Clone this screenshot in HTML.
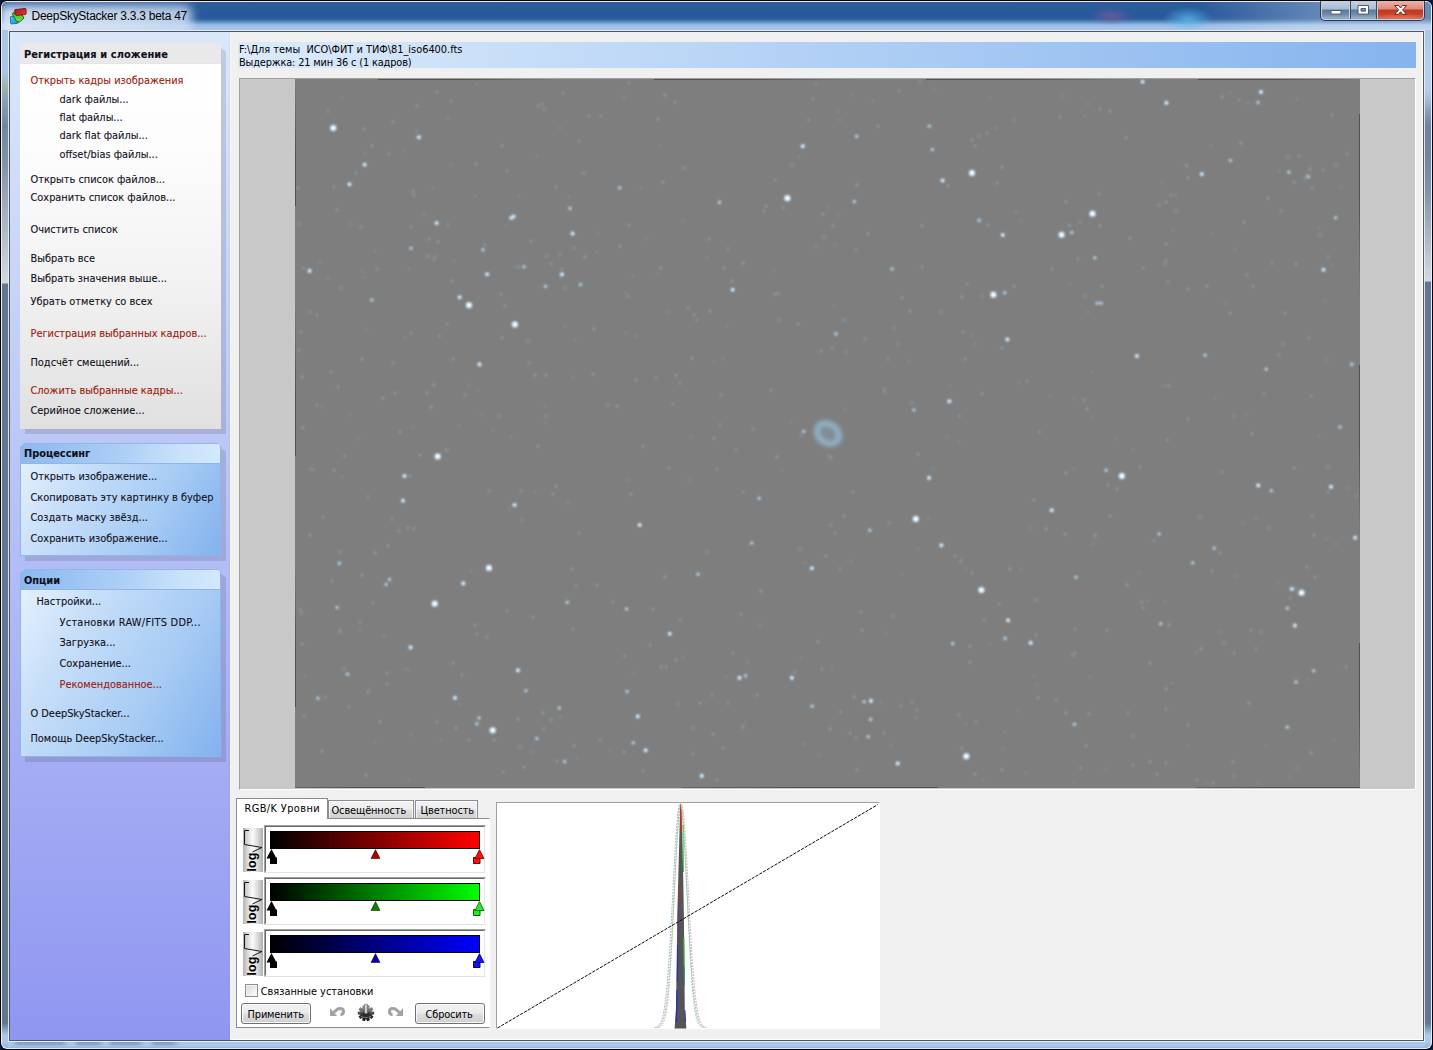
<!DOCTYPE html>
<html><head><meta charset="utf-8"><title>DeepSkyStacker 3.3.3 beta 47</title>
<style>
html,body{margin:0;padding:0;}
body{width:1433px;height:1050px;overflow:hidden;position:relative;background:#0a1a3a;font-family:"DejaVu Sans Condensed","Liberation Sans",sans-serif;font-size:11px;color:#10101a;}
.a{position:absolute;}
.t{position:absolute;white-space:pre;line-height:13px;height:13px;font-size:10.9px;-webkit-text-stroke:0.1px currentColor;}
.r{color:#9c200a;}
.n{-webkit-text-stroke:0;}
.b{font-weight:bold;}
svg{position:absolute;overflow:visible;}
</style></head>
<body>
<div class="a" style="left:0;top:0;width:1433px;height:1050px;background:#000;border-radius:7px;"></div>
<div class="a" style="left:1px;top:1px;width:1431px;height:1048px;background:#e6eff9;border-radius:6px;"></div>
<div class="a" style="left:2px;top:2px;width:1429px;height:1046px;background:linear-gradient(180deg,#7c9bc4 0,#7c9bc4 8px,#a9c7ea 30px,#a9c7ea 70px,#9fb4a8 85px,#8aa0b4 100px,#71869e 125px,#8193a8 160px,#d3d9e1 281px,#62778f 282px,#62778f 1021px,#a9c8ec 1033px,#a9c8ec 1040px,#8fb4df 1046px);border-radius:5px;"></div>
<div class="a" style="left:1424px;top:30px;width:7px;height:272px;background:linear-gradient(180deg,#a9c7ea 0,#b2cdef 28px,#b2cdef 60px,#a3bcd8 70px,#7f95ae 86px,#6f849c 96px,#71869e 125px,#8193a8 160px,#d3d9e1 251px,#62778f 252px);"></div>
<div class="a" style="left:2px;top:2px;width:1429px;height:28px;background:radial-gradient(ellipse 22px 9px at 1109px 14px,rgba(150,90,150,.55),rgba(150,90,150,0) 100%),radial-gradient(ellipse 26px 12px at 1186px 17px,rgba(90,190,240,.75),rgba(90,190,240,0) 100%),linear-gradient(100deg,rgba(255,255,255,0) 1180px,rgba(255,255,255,.28) 1300px,rgba(255,255,255,.30) 1429px),linear-gradient(180deg,#2c5d9a 0,#27589a 14px,#2d5f9c 17px,#5f8cc2 20px,#9abce6 23px,#a6c6ec 28px);border-radius:5px 5px 0 0;"></div>
<div class="a" style="left:8px;top:1041px;width:1417px;height:7px;background:linear-gradient(180deg,#cfe2f7 0,#a9c8ec 1px,#a9c8ec 5px,#8fb4df 7px);"></div>
<div class="a" style="left:12px;top:1041px;width:170px;height:4px;filter:blur(1.6px);background:linear-gradient(90deg,rgba(70,95,135,0) 0,rgba(70,95,135,.45) 6px,rgba(70,95,135,.45) 50px,rgba(70,95,135,0) 56px,rgba(70,95,135,0) 62px,rgba(70,95,135,.45) 66px,rgba(70,95,135,.45) 86px,rgba(70,95,135,0) 92px,rgba(70,95,135,0) 96px,rgba(70,95,135,.45) 100px,rgba(70,95,135,.45) 126px,rgba(70,95,135,0) 132px,rgba(70,95,135,0) 138px,rgba(70,95,135,.45) 142px,rgba(70,95,135,.45) 160px,rgba(70,95,135,0) 168px);"></div>
<div class="a" style="left:2px;top:2px;width:230px;height:28px;overflow:hidden;border-radius:5px 0 0 0;"><div class="a" style="left:-3px;top:3px;width:193px;height:32px;background:linear-gradient(90deg,rgba(222,232,246,.93) 0,rgba(214,227,244,.9) 60%,rgba(200,218,242,.85) 100%);filter:blur(5px);border-radius:8px;"></div></div>
<div class="a" style="left:8px;top:30px;width:1417px;height:1012px;border:1px solid rgba(235,243,252,.85);box-sizing:border-box;"></div>
<div class="a" id="client" style="left:9px;top:31px;width:1415px;height:1010px;background:#f0f0f0;border:1px solid #50565f;box-sizing:border-box;"></div>
<div class="a" style="left:1422px;top:32px;width:1px;height:1008px;background:#fff;"></div>
<div class="a" style="left:230px;top:1039px;width:1193px;height:1px;background:#fff;"></div>
<div class="a" id="left" style="left:10px;top:32px;width:220px;height:1008px;background:linear-gradient(180deg,#dbe8fa 0,#8f96f1 100%);"></div>
<div class="a" style="left:229px;top:32px;width:1px;height:1008px;background:rgba(0,0,60,.03);"></div>
<div class="a" style="left:230px;top:32px;width:1px;height:1008px;background:#f6f6fb;"></div>
<svg style="left:10px;top:8px" width="17" height="17" viewBox="0 0 17 17">
<defs><linearGradient id="ib" x1="0" y1="0" x2="1" y2="1"><stop offset="0" stop-color="#46c8f0"/><stop offset="1" stop-color="#1a8fd0"/></linearGradient>
<linearGradient id="ig" x1="0" y1="0" x2="0" y2="1"><stop offset="0" stop-color="#2fc21a"/><stop offset="1" stop-color="#7ee25a"/></linearGradient>
<linearGradient id="ir" x1="0" y1="0" x2="1" y2="1"><stop offset="0" stop-color="#b01414"/><stop offset="1" stop-color="#e23a34"/></linearGradient></defs>
<path d="M0.3 9 Q0.2 8.6 0.8 8.6 L5 8.2 L8.4 13.4 L7.6 15.5 L1.2 15.9 Q0.7 15.9 0.7 15.3 Z" fill="url(#ib)" stroke="#0b6a96" stroke-width="0.8" stroke-linejoin="round"/>
<path d="M3.2 4.6 L12.2 7 L14 10 L9.6 14 L6.6 13.4 L2.4 6.4 Z" fill="url(#ig)" stroke="#0c5a10" stroke-width="0.9" stroke-linejoin="round"/>
<path d="M5.2 1.6 L15 0.4 Q16 0.3 16 1.4 L16.2 5.6 Q16.2 6.4 15.2 6.5 L6.6 7.4 Q5.6 7.4 5.4 6.4 L4.6 2.6 Q4.5 1.7 5.2 1.6 Z" fill="url(#ir)" stroke="#6a0c0c" stroke-width="0.8" stroke-linejoin="round"/>
</svg>
<div class="t n" style="left:31.5px;top:9px;line-height:15px;height:15px;font-family:'Liberation Sans',sans-serif;font-size:12px;letter-spacing:-0.26px;color:#000;">DeepSkyStacker 3.3.3 beta 47</div>
<div class="a" style="left:1320px;top:1px;width:105px;height:20px;background:rgba(20,30,50,.75);border-radius:0 0 5px 5px;"></div>
<div class="a" style="left:1321px;top:1px;width:103px;height:19px;background:rgba(235,242,250,.8);border-radius:0 0 4px 4px;"></div>
<div class="a" style="left:1322px;top:1px;width:27px;height:18px;background:linear-gradient(180deg,#c4d2e3 0,#a9bdd4 8px,#5b799c 9px,#6d8aad 13px,#94abc8 17px);border-radius:0 0 0 3px;"></div>
<div class="a" style="left:1351px;top:1px;width:25px;height:18px;background:linear-gradient(180deg,#c4d2e3 0,#a9bdd4 8px,#5b799c 9px,#6d8aad 13px,#94abc8 17px);"></div>
<div class="a" style="left:1350px;top:1px;width:1px;height:18px;background:#3b4a60;"></div>
<div class="a" style="left:1376px;top:1px;width:1px;height:18px;background:#3b4a60;"></div>
<div class="a" style="left:1378px;top:1px;width:45px;height:18px;background:radial-gradient(ellipse 22px 7px at 50% 100%,rgba(240,120,80,.55),rgba(240,120,80,0)),linear-gradient(180deg,#eeb3a6 0,#dc8a7a 8px,#c03a22 9px,#c64028 13px,#d8694c 17px);border-radius:0 0 3px 0;"></div>
<svg style="left:1320px;top:0" width="106" height="22" viewBox="0 0 106 22">
<rect x="11" y="10.5" width="10" height="3.6" fill="#fff" stroke="#4a5a70" stroke-width="1"/>
<path d="M38 5.5 h10.5 v8.6 h-10.5 z M41 8.5 h4.5 v2.6 h-4.5 z" fill="#fff" fill-rule="evenodd" stroke="#4a5a70" stroke-width="1"/>
<path d="M74.6 5.5 h4 l2 2.5 l2 -2.5 h4 l-4 4.4 l4 4.4 h-4 l-2 -2.5 l-2 2.5 h-4 l4 -4.4 z" fill="#fff" stroke="#6a2418" stroke-width="1" stroke-linejoin="round"/>
</svg>
<div class="a" style="left:25px;top:48px;width:201px;height:386px;background:rgba(20,20,40,0.13);clip-path:polygon(0 0,196px 0,201px 3.5px,201px 100%,0 100%);"></div>
<div class="a" style="left:20px;top:43px;width:201px;height:386px;background:linear-gradient(180deg,#ffffff 0,#fdfdfd 25%,#f3f3f3 60%,#e0e0e0 100%);border-radius:5px 5px 0 0;"></div>
<div class="a" style="left:20px;top:43px;width:201px;height:21px;background:linear-gradient(180deg,#e9e9e9 0,#e9e9e9 20px,#e2e2e2 21px);border-radius:5px 5px 0 0;"></div>
<div class="a" style="left:25px;top:448px;width:201px;height:113px;background:rgba(20,20,40,0.13);clip-path:polygon(0 0,196px 0,201px 3.5px,201px 100%,0 100%);"></div>
<div class="a" style="left:20px;top:443px;width:201px;height:113px;background:linear-gradient(120deg,#e8f3fd 0,#c6def9 30%,#a8ccf4 65%,#82b2ee 100%);border:1px solid #8fb6ea;border-top:none;box-sizing:border-box;clip-path:polygon(0 4px,4px 0,197px 0,201px 4px,201px 100%,0 100%);"></div>
<div class="a" style="left:20px;top:443px;width:201px;height:21px;background:linear-gradient(100deg,#8cb8ef 0,#a8ccf5 45%,#c8e2fa 80%,#d4e9fc 100%);border:1px solid #8fb6ea;box-sizing:border-box;clip-path:polygon(0 4px,4px 0,197px 0,201px 4px,201px 100%,0 100%);"></div>
<div class="a" style="left:25px;top:574px;width:201px;height:188px;background:rgba(20,20,40,0.13);clip-path:polygon(0 0,196px 0,201px 3.5px,201px 100%,0 100%);"></div>
<div class="a" style="left:20px;top:569px;width:201px;height:188px;background:linear-gradient(120deg,#e8f3fd 0,#c6def9 30%,#a8ccf4 65%,#82b2ee 100%);border:1px solid #8fb6ea;border-top:none;box-sizing:border-box;clip-path:polygon(0 4px,4px 0,197px 0,201px 4px,201px 100%,0 100%);"></div>
<div class="a" style="left:20px;top:569px;width:201px;height:21px;background:linear-gradient(100deg,#8cb8ef 0,#a8ccf5 45%,#c8e2fa 80%,#d4e9fc 100%);border:1px solid #8fb6ea;box-sizing:border-box;clip-path:polygon(0 4px,4px 0,197px 0,201px 4px,201px 100%,0 100%);"></div>
<div class="t b" id="m0" style="left:24px;top:48px;letter-spacing:.12px;">Регистрация и сложение</div>
<div class="t r" id="m1" style="left:30.5px;top:74px;">Открыть кадры изображения</div>
<div class="t " id="m2" style="left:59.5px;top:93px;">dark файлы...</div>
<div class="t " id="m3" style="left:59.5px;top:111px;">flat файлы...</div>
<div class="t " id="m4" style="left:59.5px;top:129px;">dark flat файлы...</div>
<div class="t " id="m5" style="left:59.5px;top:148px;">offset/bias файлы...</div>
<div class="t " id="m6" style="left:30.5px;top:173px;">Открыть список файлов...</div>
<div class="t " id="m7" style="left:30.5px;top:191px;">Сохранить список файлов...</div>
<div class="t " id="m8" style="left:30.5px;top:223px;">Очистить список</div>
<div class="t " id="m9" style="left:30.5px;top:252px;">Выбрать все</div>
<div class="t " id="m10" style="left:30.5px;top:272px;">Выбрать значения выше...</div>
<div class="t " id="m11" style="left:30.5px;top:295px;">Убрать отметку со всех</div>
<div class="t r" id="m12" style="left:30.5px;top:327px;">Регистрация выбранных кадров...</div>
<div class="t " id="m13" style="left:30.5px;top:356px;">Подсчёт смещений...</div>
<div class="t r" id="m14" style="left:30.5px;top:384px;">Сложить выбранные кадры...</div>
<div class="t " id="m15" style="left:30.5px;top:404px;">Серийное сложение...</div>
<div class="t b" id="m16" style="left:24px;top:447px;">Процессинг</div>
<div class="t " id="m17" style="left:30.5px;top:470px;">Открыть изображение...</div>
<div class="t " id="m18" style="left:30.5px;top:491px;">Скопировать эту картинку в буфер</div>
<div class="t " id="m19" style="left:30.5px;top:511px;">Создать маску звёзд...</div>
<div class="t " id="m20" style="left:30.5px;top:532px;">Сохранить изображение...</div>
<div class="t b" id="m21" style="left:24px;top:574px;">Опции</div>
<div class="t " id="m22" style="left:36.5px;top:595px;">Настройки...</div>
<div class="t " id="m23" style="left:59.5px;top:616px;letter-spacing:.27px;">Установки RAW/FITS DDP...</div>
<div class="t " id="m24" style="left:59.5px;top:636px;">Загрузка...</div>
<div class="t " id="m25" style="left:59.5px;top:657px;">Сохранение...</div>
<div class="t r" id="m26" style="left:59.5px;top:678px;">Рекомендованное...</div>
<div class="t " id="m27" style="left:30.5px;top:707px;">О DeepSkyStacker...</div>
<div class="t " id="m28" style="left:30.5px;top:732px;">Помощь DeepSkyStacker...</div>
<div class="a" style="left:238px;top:42px;width:1178px;height:26px;background:linear-gradient(90deg,#dcebfb 0,#86b4ee 100%);"></div>
<div class="t n" id="i0" style="left:239px;top:43px;color:#000;">F:\Для темы  ИСО\ФИТ и ТИФ\81_iso6400.fts</div>
<div class="t n" id="i1" style="left:239px;top:56px;color:#000;letter-spacing:-.15px;">Выдержка: 21 мин 36 с (1 кадров)</div>
<div class="a" style="left:239px;top:78px;width:1177px;height:712px;background:#c8c8c8;border:1px solid;border-color:#a0a0a0 #fff #fff #a0a0a0;box-sizing:border-box;"></div>
<div class="a" id="sky" style="left:295px;top:79px;width:1065px;height:709px;background:#7e7e7e;"></div>
<svg style="left:0;top:0" width="1433" height="1050" viewBox="0 0 1433 1050">
<defs><filter id="sf" x="-50%" y="-50%" width="200%" height="200%"><feGaussianBlur stdDeviation="1"/></filter><filter id="sb" x="-50%" y="-50%" width="200%" height="200%"><feGaussianBlur stdDeviation="0.95"/></filter><filter id="nb" x="-50%" y="-50%" width="200%" height="200%"><feGaussianBlur stdDeviation="1.9"/></filter><clipPath id="sc"><rect x="295" y="79" width="1065" height="709"/></clipPath></defs>
<g clip-path="url(#sc)">
<g filter="url(#sf)" fill="#8a98a2">
<circle cx="641" cy="188" r="1.1"/>
<circle cx="987" cy="133" r="1.5"/>
<circle cx="865" cy="339" r="1.5"/>
<circle cx="359" cy="439" r="1.1"/>
<circle cx="338" cy="387" r="1.5"/>
<circle cx="372" cy="146" r="1.5"/>
<circle cx="748" cy="663" r="1.1"/>
<circle cx="429" cy="239" r="1.5"/>
<circle cx="962" cy="748" r="1.5"/>
<circle cx="909" cy="361" r="1.1"/>
<circle cx="1332" cy="115" r="1.5"/>
<circle cx="1207" cy="286" r="1.5"/>
<circle cx="451" cy="165" r="1.1"/>
<circle cx="625" cy="656" r="1.5"/>
<circle cx="489" cy="491" r="1.5"/>
<circle cx="975" cy="344" r="1.1"/>
<circle cx="878" cy="126" r="1.5"/>
<circle cx="361" cy="227" r="1.5"/>
<circle cx="1019" cy="383" r="1.1"/>
<circle cx="631" cy="494" r="1.5"/>
<circle cx="778" cy="293" r="1.5"/>
<circle cx="1139" cy="573" r="1.1"/>
<circle cx="556" cy="486" r="1.5"/>
<circle cx="854" cy="697" r="1.5"/>
<circle cx="1070" cy="284" r="1.1"/>
<circle cx="1336" cy="165" r="1.5"/>
<circle cx="741" cy="614" r="1.5"/>
<circle cx="459" cy="426" r="1.1"/>
<circle cx="340" cy="552" r="1.5"/>
<circle cx="1108" cy="485" r="1.5"/>
<circle cx="1225" cy="303" r="1.1"/>
<circle cx="1034" cy="500" r="1.5"/>
<circle cx="912" cy="403" r="1.5"/>
<circle cx="1188" cy="746" r="1.1"/>
<circle cx="800" cy="549" r="1.5"/>
<circle cx="362" cy="575" r="1.5"/>
<circle cx="983" cy="780" r="1.1"/>
<circle cx="1168" cy="282" r="1.5"/>
<circle cx="707" cy="552" r="1.5"/>
<circle cx="322" cy="407" r="1.1"/>
<circle cx="476" cy="164" r="1.5"/>
<circle cx="360" cy="622" r="1.5"/>
<circle cx="435" cy="256" r="1.1"/>
<circle cx="712" cy="695" r="1.5"/>
<circle cx="383" cy="398" r="1.5"/>
<circle cx="880" cy="703" r="1.1"/>
<circle cx="1166" cy="689" r="1.5"/>
<circle cx="593" cy="374" r="1.5"/>
<circle cx="678" cy="704" r="1.1"/>
<circle cx="1312" cy="188" r="1.5"/>
<circle cx="485" cy="245" r="1.5"/>
<circle cx="545" cy="423" r="1.1"/>
<circle cx="922" cy="267" r="1.5"/>
<circle cx="302" cy="377" r="1.5"/>
<circle cx="689" cy="480" r="1.1"/>
<circle cx="1307" cy="567" r="1.5"/>
<circle cx="844" cy="516" r="1.5"/>
<circle cx="1014" cy="120" r="1.1"/>
<circle cx="1251" cy="630" r="1.5"/>
<circle cx="1224" cy="643" r="1.5"/>
<circle cx="714" cy="362" r="1.1"/>
<circle cx="408" cy="528" r="1.5"/>
<circle cx="364" cy="129" r="1.5"/>
<circle cx="519" cy="196" r="1.1"/>
<circle cx="658" cy="119" r="1.5"/>
<circle cx="298" cy="188" r="1.5"/>
<circle cx="405" cy="338" r="1.1"/>
<circle cx="325" cy="697" r="1.5"/>
<circle cx="948" cy="186" r="1.5"/>
<circle cx="565" cy="326" r="1.1"/>
<circle cx="684" cy="168" r="1.5"/>
<circle cx="1197" cy="780" r="1.5"/>
<circle cx="791" cy="422" r="1.1"/>
<circle cx="389" cy="154" r="1.5"/>
<circle cx="661" cy="268" r="1.5"/>
<circle cx="1176" cy="195" r="1.1"/>
<circle cx="322" cy="751" r="1.5"/>
<circle cx="857" cy="185" r="1.5"/>
<circle cx="873" cy="101" r="1.1"/>
<circle cx="857" cy="770" r="1.5"/>
<circle cx="1212" cy="571" r="1.5"/>
<circle cx="575" cy="340" r="1.1"/>
<circle cx="475" cy="625" r="1.5"/>
<circle cx="862" cy="630" r="1.5"/>
<circle cx="647" cy="239" r="1.1"/>
<circle cx="1157" cy="774" r="1.5"/>
<circle cx="1201" cy="649" r="1.5"/>
<circle cx="1165" cy="602" r="1.1"/>
<circle cx="538" cy="446" r="1.5"/>
<circle cx="675" cy="102" r="1.5"/>
<circle cx="328" cy="278" r="1.1"/>
<circle cx="572" cy="569" r="1.5"/>
<circle cx="1311" cy="396" r="1.5"/>
<circle cx="1290" cy="777" r="1.1"/>
<circle cx="1309" cy="338" r="1.5"/>
<circle cx="531" cy="241" r="1.5"/>
<circle cx="506" cy="226" r="1.1"/>
<circle cx="959" cy="715" r="1.5"/>
<circle cx="1188" cy="419" r="1.5"/>
<circle cx="990" cy="644" r="1.1"/>
<circle cx="388" cy="546" r="1.5"/>
<circle cx="1261" cy="632" r="1.5"/>
<circle cx="1092" cy="418" r="1.1"/>
<circle cx="487" cy="637" r="1.5"/>
<circle cx="650" cy="645" r="1.5"/>
<circle cx="1327" cy="360" r="1.1"/>
<circle cx="723" cy="748" r="1.5"/>
<circle cx="1066" cy="202" r="1.5"/>
<circle cx="433" cy="188" r="1.1"/>
<circle cx="1256" cy="649" r="1.5"/>
<circle cx="453" cy="663" r="1.5"/>
<circle cx="1336" cy="544" r="1.1"/>
<circle cx="669" cy="468" r="1.5"/>
<circle cx="437" cy="92" r="1.5"/>
<circle cx="1326" cy="539" r="1.1"/>
<circle cx="856" cy="738" r="1.5"/>
<circle cx="757" cy="695" r="1.5"/>
<circle cx="1173" cy="230" r="1.1"/>
<circle cx="565" cy="288" r="1.5"/>
<circle cx="553" cy="494" r="1.5"/>
<circle cx="573" cy="377" r="1.1"/>
<circle cx="437" cy="722" r="1.5"/>
<circle cx="673" cy="404" r="1.5"/>
<circle cx="916" cy="718" r="1.1"/>
<circle cx="743" cy="727" r="1.5"/>
<circle cx="829" cy="456" r="1.5"/>
<circle cx="852" cy="95" r="1.1"/>
<circle cx="764" cy="211" r="1.5"/>
<circle cx="302" cy="644" r="1.5"/>
<circle cx="481" cy="415" r="1.1"/>
<circle cx="1066" cy="473" r="1.5"/>
<circle cx="643" cy="446" r="1.5"/>
<circle cx="886" cy="633" r="1.1"/>
<circle cx="410" cy="476" r="1.5"/>
<circle cx="561" cy="277" r="1.5"/>
<circle cx="1116" cy="439" r="1.1"/>
<circle cx="893" cy="616" r="1.5"/>
<circle cx="1264" cy="394" r="1.5"/>
<circle cx="947" cy="437" r="1.1"/>
<circle cx="840" cy="569" r="1.5"/>
<circle cx="777" cy="457" r="1.5"/>
<circle cx="804" cy="744" r="1.1"/>
<circle cx="1038" cy="698" r="1.5"/>
<circle cx="1296" cy="264" r="1.5"/>
<circle cx="891" cy="745" r="1.1"/>
<circle cx="1188" cy="178" r="1.5"/>
<circle cx="427" cy="393" r="1.5"/>
<circle cx="375" cy="251" r="1.1"/>
<circle cx="375" cy="553" r="1.5"/>
<circle cx="1128" cy="713" r="1.5"/>
<circle cx="462" cy="585" r="1.1"/>
<circle cx="997" cy="183" r="1.5"/>
<circle cx="1233" cy="762" r="1.5"/>
<circle cx="531" cy="752" r="1.1"/>
<circle cx="720" cy="425" r="1.5"/>
<circle cx="1346" cy="667" r="1.5"/>
<circle cx="469" cy="385" r="1.1"/>
<circle cx="844" cy="320" r="1.5"/>
<circle cx="505" cy="306" r="1.5"/>
<circle cx="1063" cy="96" r="1.1"/>
<circle cx="885" cy="392" r="1.5"/>
<circle cx="317" cy="315" r="1.5"/>
<circle cx="959" cy="442" r="1.1"/>
<circle cx="366" cy="775" r="1.5"/>
<circle cx="1133" cy="765" r="1.5"/>
<circle cx="409" cy="269" r="1.1"/>
<circle cx="340" cy="630" r="1.5"/>
<circle cx="584" cy="173" r="1.5"/>
<circle cx="745" cy="723" r="1.1"/>
<circle cx="1165" cy="264" r="1.5"/>
<circle cx="456" cy="728" r="1.5"/>
<circle cx="902" cy="574" r="1.1"/>
<circle cx="393" cy="122" r="1.5"/>
<circle cx="1027" cy="381" r="1.5"/>
<circle cx="375" cy="742" r="1.1"/>
<circle cx="970" cy="646" r="1.5"/>
<circle cx="387" cy="684" r="1.5"/>
<circle cx="369" cy="689" r="1.1"/>
<circle cx="779" cy="320" r="1.5"/>
<circle cx="884" cy="733" r="1.5"/>
<circle cx="582" cy="173" r="1.1"/>
<circle cx="856" cy="250" r="1.5"/>
<circle cx="414" cy="195" r="1.5"/>
<circle cx="351" cy="224" r="1.1"/>
<circle cx="628" cy="296" r="1.5"/>
<circle cx="1102" cy="286" r="1.5"/>
<circle cx="828" cy="207" r="1.1"/>
<circle cx="665" cy="95" r="1.5"/>
<circle cx="563" cy="93" r="1.5"/>
<circle cx="1074" cy="469" r="1.1"/>
<circle cx="499" cy="416" r="1.5"/>
<circle cx="1288" cy="157" r="1.5"/>
<circle cx="1165" cy="386" r="1.1"/>
<circle cx="822" cy="669" r="1.5"/>
<circle cx="714" cy="438" r="1.5"/>
<circle cx="1026" cy="773" r="1.1"/>
<circle cx="661" cy="667" r="1.5"/>
<circle cx="1046" cy="529" r="1.5"/>
<circle cx="727" cy="326" r="1.1"/>
<circle cx="356" cy="173" r="1.5"/>
<circle cx="373" cy="603" r="1.5"/>
<circle cx="569" cy="197" r="1.1"/>
<circle cx="387" cy="673" r="1.5"/>
<circle cx="1220" cy="553" r="1.5"/>
<circle cx="597" cy="252" r="1.1"/>
<circle cx="608" cy="405" r="1.5"/>
<circle cx="465" cy="395" r="1.5"/>
<circle cx="577" cy="758" r="1.1"/>
<circle cx="1328" cy="467" r="1.5"/>
<circle cx="557" cy="761" r="1.5"/>
<circle cx="626" cy="333" r="1.1"/>
<circle cx="299" cy="350" r="1.5"/>
<circle cx="801" cy="435" r="1.5"/>
<circle cx="511" cy="437" r="1.1"/>
<circle cx="303" cy="268" r="1.5"/>
<circle cx="393" cy="363" r="1.5"/>
<circle cx="342" cy="98" r="1.1"/>
<circle cx="620" cy="246" r="1.5"/>
<circle cx="918" cy="454" r="1.5"/>
<circle cx="1093" cy="544" r="1.1"/>
<circle cx="1056" cy="700" r="1.5"/>
<circle cx="710" cy="311" r="1.5"/>
<circle cx="1341" cy="187" r="1.1"/>
<circle cx="1065" cy="534" r="1.5"/>
<circle cx="344" cy="669" r="1.5"/>
<circle cx="1243" cy="523" r="1.1"/>
<circle cx="1075" cy="653" r="1.5"/>
<circle cx="446" cy="450" r="1.5"/>
<circle cx="832" cy="669" r="1.1"/>
<circle cx="1150" cy="663" r="1.5"/>
<circle cx="917" cy="710" r="1.5"/>
<circle cx="1021" cy="569" r="1.1"/>
<circle cx="542" cy="104" r="1.5"/>
<circle cx="439" cy="336" r="1.5"/>
<circle cx="409" cy="670" r="1.1"/>
<circle cx="889" cy="523" r="1.5"/>
<circle cx="961" cy="561" r="1.5"/>
<circle cx="816" cy="84" r="1.1"/>
<circle cx="1143" cy="608" r="1.5"/>
<circle cx="831" cy="458" r="1.5"/>
<circle cx="996" cy="128" r="1.1"/>
<circle cx="1078" cy="259" r="1.5"/>
<circle cx="377" cy="269" r="1.5"/>
<circle cx="1070" cy="226" r="1.1"/>
<circle cx="1081" cy="768" r="1.5"/>
<circle cx="821" cy="351" r="1.5"/>
<circle cx="805" cy="563" r="1.1"/>
<circle cx="1110" cy="516" r="1.5"/>
<circle cx="979" cy="136" r="1.5"/>
<circle cx="454" cy="261" r="1.1"/>
<circle cx="1085" cy="296" r="1.5"/>
<circle cx="899" cy="91" r="1.5"/>
<circle cx="362" cy="271" r="1.1"/>
<circle cx="1010" cy="569" r="1.5"/>
<circle cx="1014" cy="286" r="1.5"/>
<circle cx="845" cy="409" r="1.1"/>
<circle cx="792" cy="165" r="1.5"/>
<circle cx="1244" cy="222" r="1.5"/>
<circle cx="1334" cy="740" r="1.1"/>
<circle cx="317" cy="405" r="1.5"/>
<circle cx="1166" cy="763" r="1.5"/>
<circle cx="774" cy="271" r="1.1"/>
<circle cx="520" cy="747" r="1.5"/>
<circle cx="521" cy="491" r="1.5"/>
<circle cx="448" cy="450" r="1.1"/>
<circle cx="1307" cy="175" r="1.5"/>
<circle cx="1167" cy="440" r="1.5"/>
<circle cx="1237" cy="576" r="1.1"/>
<circle cx="543" cy="713" r="1.5"/>
<circle cx="813" cy="99" r="1.5"/>
<circle cx="302" cy="428" r="1.1"/>
<circle cx="775" cy="294" r="1.5"/>
<circle cx="447" cy="324" r="1.5"/>
<circle cx="633" cy="673" r="1.1"/>
<circle cx="300" cy="610" r="1.5"/>
<circle cx="1187" cy="166" r="1.5"/>
<circle cx="1279" cy="583" r="1.1"/>
<circle cx="1253" cy="286" r="1.5"/>
<circle cx="692" cy="358" r="1.5"/>
<circle cx="1356" cy="496" r="1.1"/>
<circle cx="680" cy="383" r="1.5"/>
<circle cx="589" cy="116" r="1.5"/>
<circle cx="406" cy="669" r="1.1"/>
<circle cx="600" cy="740" r="1.5"/>
<circle cx="562" cy="269" r="1.5"/>
<circle cx="839" cy="215" r="1.1"/>
<circle cx="693" cy="754" r="1.5"/>
<circle cx="1234" cy="653" r="1.5"/>
<circle cx="966" cy="724" r="1.1"/>
<circle cx="1294" cy="468" r="1.5"/>
<circle cx="1060" cy="117" r="1.5"/>
<circle cx="1074" cy="399" r="1.1"/>
<circle cx="1095" cy="535" r="1.5"/>
<circle cx="601" cy="116" r="1.5"/>
<circle cx="1279" cy="171" r="1.1"/>
<circle cx="798" cy="324" r="1.5"/>
<circle cx="613" cy="602" r="1.5"/>
<circle cx="1332" cy="265" r="1.1"/>
<circle cx="993" cy="293" r="1.5"/>
<circle cx="888" cy="359" r="1.5"/>
<circle cx="475" cy="196" r="1.1"/>
<circle cx="518" cy="719" r="1.5"/>
<circle cx="824" cy="237" r="1.5"/>
<circle cx="1258" cy="783" r="1.1"/>
<circle cx="775" cy="180" r="1.5"/>
<circle cx="502" cy="146" r="1.5"/>
<circle cx="660" cy="146" r="1.1"/>
<circle cx="551" cy="264" r="1.5"/>
<circle cx="901" cy="706" r="1.5"/>
<circle cx="1092" cy="372" r="1.1"/>
<circle cx="736" cy="450" r="1.5"/>
<circle cx="697" cy="320" r="1.5"/>
<circle cx="364" cy="277" r="1.1"/>
<circle cx="1323" cy="170" r="1.5"/>
<circle cx="831" cy="525" r="1.5"/>
<circle cx="1212" cy="234" r="1.1"/>
<circle cx="585" cy="257" r="1.5"/>
<circle cx="721" cy="395" r="1.5"/>
<circle cx="1308" cy="679" r="1.1"/>
<circle cx="1222" cy="97" r="1.5"/>
<circle cx="332" cy="581" r="1.5"/>
<circle cx="1247" cy="415" r="1.1"/>
<circle cx="920" cy="82" r="1.5"/>
<circle cx="713" cy="734" r="1.5"/>
<circle cx="1172" cy="683" r="1.1"/>
<circle cx="1328" cy="257" r="1.5"/>
<circle cx="413" cy="191" r="1.5"/>
<circle cx="851" cy="561" r="1.1"/>
<circle cx="1295" cy="589" r="1.5"/>
<circle cx="984" cy="620" r="1.5"/>
<circle cx="782" cy="470" r="1.1"/>
<circle cx="340" cy="632" r="1.5"/>
<circle cx="544" cy="729" r="1.5"/>
<circle cx="982" cy="296" r="1.1"/>
<circle cx="434" cy="259" r="1.5"/>
<circle cx="972" cy="573" r="1.5"/>
<circle cx="417" cy="131" r="1.1"/>
<circle cx="853" cy="492" r="1.5"/>
<circle cx="709" cy="239" r="1.5"/>
<circle cx="935" cy="89" r="1.1"/>
<circle cx="617" cy="406" r="1.5"/>
<circle cx="1314" cy="535" r="1.5"/>
<circle cx="1234" cy="416" r="1.1"/>
<circle cx="547" cy="256" r="1.5"/>
<circle cx="1315" cy="577" r="1.5"/>
<circle cx="624" cy="97" r="1.1"/>
<circle cx="826" cy="556" r="1.5"/>
<circle cx="743" cy="263" r="1.5"/>
<circle cx="1005" cy="732" r="1.1"/>
<circle cx="538" cy="106" r="1.5"/>
<circle cx="656" cy="378" r="1.5"/>
<circle cx="1021" cy="221" r="1.1"/>
<circle cx="1142" cy="602" r="1.5"/>
<circle cx="833" cy="226" r="1.5"/>
<circle cx="1325" cy="301" r="1.1"/>
<circle cx="1166" cy="244" r="1.5"/>
<circle cx="533" cy="617" r="1.5"/>
<circle cx="610" cy="751" r="1.1"/>
<circle cx="823" cy="214" r="1.5"/>
<circle cx="535" cy="375" r="1.5"/>
<circle cx="1003" cy="749" r="1.1"/>
<circle cx="453" cy="359" r="1.5"/>
<circle cx="524" cy="767" r="1.5"/>
<circle cx="448" cy="118" r="1.1"/>
<circle cx="362" cy="359" r="1.5"/>
<circle cx="1249" cy="703" r="1.5"/>
<circle cx="1074" cy="783" r="1.1"/>
<circle cx="1285" cy="313" r="1.5"/>
<circle cx="494" cy="740" r="1.5"/>
<circle cx="1088" cy="104" r="1.1"/>
<circle cx="1002" cy="348" r="1.5"/>
<circle cx="694" cy="315" r="1.5"/>
<circle cx="477" cy="84" r="1.1"/>
<circle cx="594" cy="329" r="1.5"/>
<circle cx="1310" cy="169" r="1.5"/>
<circle cx="1319" cy="228" r="1.1"/>
<circle cx="676" cy="660" r="1.5"/>
<circle cx="1169" cy="386" r="1.5"/>
<circle cx="350" cy="415" r="1.1"/>
<circle cx="693" cy="728" r="1.5"/>
<circle cx="502" cy="338" r="1.5"/>
<circle cx="1248" cy="103" r="1.1"/>
<circle cx="733" cy="653" r="1.5"/>
<circle cx="1110" cy="111" r="1.5"/>
<circle cx="335" cy="126" r="1.1"/>
<circle cx="1272" cy="263" r="1.5"/>
<circle cx="1089" cy="714" r="1.5"/>
<circle cx="657" cy="273" r="1.1"/>
<circle cx="1312" cy="516" r="1.5"/>
<circle cx="576" cy="586" r="1.5"/>
<circle cx="633" cy="276" r="1.1"/>
<circle cx="302" cy="613" r="1.5"/>
<circle cx="1269" cy="528" r="1.5"/>
<circle cx="1297" cy="99" r="1.1"/>
<circle cx="546" cy="416" r="1.5"/>
<circle cx="1311" cy="753" r="1.5"/>
<circle cx="707" cy="258" r="1.1"/>
<circle cx="753" cy="429" r="1.5"/>
<circle cx="1281" cy="211" r="1.5"/>
<circle cx="1148" cy="601" r="1.1"/>
<circle cx="1169" cy="625" r="1.5"/>
<circle cx="941" cy="312" r="1.5"/>
<circle cx="636" cy="336" r="1.1"/>
<circle cx="1126" cy="138" r="1.5"/>
<circle cx="507" cy="611" r="1.5"/>
<circle cx="560" cy="128" r="1.1"/>
<circle cx="334" cy="470" r="1.5"/>
<circle cx="643" cy="771" r="1.5"/>
<circle cx="1234" cy="776" r="1.1"/>
<circle cx="579" cy="141" r="1.5"/>
<circle cx="400" cy="432" r="1.5"/>
<circle cx="1050" cy="396" r="1.1"/>
<circle cx="546" cy="375" r="1.5"/>
<circle cx="955" cy="556" r="1.5"/>
<circle cx="1090" cy="677" r="1.1"/>
<circle cx="1002" cy="167" r="1.5"/>
<circle cx="1188" cy="289" r="1.5"/>
<circle cx="898" cy="344" r="1.1"/>
<circle cx="1080" cy="222" r="1.5"/>
<circle cx="560" cy="254" r="1.5"/>
<circle cx="460" cy="704" r="1.1"/>
<circle cx="910" cy="311" r="1.5"/>
<circle cx="717" cy="780" r="1.5"/>
<circle cx="835" cy="245" r="1.1"/>
<circle cx="1154" cy="541" r="1.5"/>
<circle cx="1347" cy="154" r="1.5"/>
<circle cx="801" cy="658" r="1.1"/>
<circle cx="1188" cy="725" r="1.5"/>
<circle cx="341" cy="288" r="1.5"/>
<circle cx="424" cy="215" r="1.1"/>
<circle cx="1328" cy="492" r="1.5"/>
<circle cx="1283" cy="344" r="1.5"/>
<circle cx="1215" cy="398" r="1.1"/>
<circle cx="573" cy="629" r="1.5"/>
<circle cx="1299" cy="156" r="1.5"/>
<circle cx="929" cy="518" r="1.1"/>
<circle cx="528" cy="341" r="1.5"/>
<circle cx="448" cy="225" r="1.5"/>
<circle cx="568" cy="503" r="1.1"/>
<circle cx="988" cy="225" r="1.5"/>
<circle cx="310" cy="312" r="1.5"/>
<circle cx="1016" cy="212" r="1.1"/>
<circle cx="629" cy="225" r="1.5"/>
<circle cx="1140" cy="467" r="1.5"/>
<circle cx="365" cy="153" r="1.1"/>
<circle cx="717" cy="469" r="1.5"/>
<circle cx="975" cy="146" r="1.5"/>
<circle cx="471" cy="571" r="1.1"/>
<circle cx="732" cy="281" r="1.5"/>
<circle cx="624" cy="752" r="1.5"/>
<circle cx="629" cy="480" r="1.1"/>
<circle cx="676" cy="375" r="1.5"/>
<circle cx="1213" cy="783" r="1.5"/>
<circle cx="683" cy="221" r="1.1"/>
<circle cx="1069" cy="225" r="1.5"/>
<circle cx="304" cy="716" r="1.5"/>
<circle cx="747" cy="659" r="1.1"/>
<circle cx="728" cy="703" r="1.5"/>
<circle cx="786" cy="196" r="1.5"/>
<circle cx="314" cy="470" r="1.1"/>
<circle cx="976" cy="722" r="1.5"/>
<circle cx="392" cy="519" r="1.5"/>
<circle cx="691" cy="437" r="1.1"/>
<circle cx="452" cy="281" r="1.5"/>
<circle cx="850" cy="733" r="1.5"/>
<circle cx="413" cy="427" r="1.1"/>
<circle cx="1150" cy="762" r="1.5"/>
<circle cx="507" cy="171" r="1.5"/>
<circle cx="1297" cy="768" r="1.1"/>
<circle cx="809" cy="120" r="1.5"/>
<circle cx="1279" cy="355" r="1.5"/>
<circle cx="1256" cy="518" r="1.1"/>
<circle cx="1171" cy="195" r="1.5"/>
<circle cx="1130" cy="238" r="1.5"/>
<circle cx="726" cy="677" r="1.1"/>
<circle cx="1176" cy="211" r="1.5"/>
<circle cx="529" cy="363" r="1.5"/>
<circle cx="846" cy="352" r="1.1"/>
<circle cx="428" cy="256" r="1.5"/>
<circle cx="1066" cy="713" r="1.5"/>
<circle cx="342" cy="477" r="1.1"/>
<circle cx="1100" cy="109" r="1.5"/>
<circle cx="1186" cy="165" r="1.5"/>
<circle cx="933" cy="469" r="1.1"/>
<circle cx="962" cy="297" r="1.5"/>
<circle cx="743" cy="492" r="1.5"/>
<circle cx="749" cy="545" r="1.1"/>
<circle cx="771" cy="390" r="1.5"/>
<circle cx="323" cy="517" r="1.5"/>
<circle cx="816" cy="247" r="1.1"/>
<circle cx="1107" cy="630" r="1.5"/>
<circle cx="783" cy="208" r="1.5"/>
<circle cx="799" cy="157" r="1.1"/>
<circle cx="434" cy="385" r="1.5"/>
<circle cx="395" cy="393" r="1.5"/>
<circle cx="838" cy="111" r="1.1"/>
<circle cx="972" cy="140" r="1.5"/>
<circle cx="1075" cy="629" r="1.5"/>
<circle cx="840" cy="120" r="1.1"/>
<circle cx="832" cy="348" r="1.5"/>
<circle cx="1305" cy="178" r="1.5"/>
<circle cx="1206" cy="782" r="1.1"/>
<circle cx="1073" cy="655" r="1.5"/>
<circle cx="503" cy="772" r="1.5"/>
<circle cx="819" cy="755" r="1.1"/>
<circle cx="1268" cy="198" r="1.5"/>
<circle cx="1133" cy="736" r="1.5"/>
<circle cx="367" cy="329" r="1.1"/>
<circle cx="1099" cy="194" r="1.5"/>
<circle cx="1247" cy="275" r="1.5"/>
<circle cx="1162" cy="183" r="1.1"/>
<circle cx="830" cy="729" r="1.5"/>
<circle cx="519" cy="267" r="1.5"/>
<circle cx="834" cy="306" r="1.1"/>
<circle cx="337" cy="210" r="1.5"/>
<circle cx="469" cy="740" r="1.5"/>
<circle cx="1018" cy="711" r="1.1"/>
<circle cx="477" cy="634" r="1.5"/>
<circle cx="420" cy="455" r="1.5"/>
<circle cx="972" cy="335" r="1.1"/>
<circle cx="1222" cy="472" r="1.5"/>
<circle cx="912" cy="702" r="1.5"/>
<circle cx="409" cy="780" r="1.1"/>
<circle cx="965" cy="359" r="1.5"/>
<circle cx="1143" cy="268" r="1.5"/>
<circle cx="1347" cy="488" r="1.1"/>
<circle cx="680" cy="620" r="1.5"/>
<circle cx="766" cy="206" r="1.5"/>
<circle cx="1085" cy="116" r="1.1"/>
<circle cx="1166" cy="260" r="1.5"/>
<circle cx="975" cy="774" r="1.5"/>
<circle cx="918" cy="549" r="1.1"/>
<circle cx="629" cy="83" r="1.5"/>
<circle cx="334" cy="187" r="1.5"/>
<circle cx="950" cy="386" r="1.1"/>
<circle cx="841" cy="712" r="1.5"/>
<circle cx="438" cy="242" r="1.5"/>
<circle cx="990" cy="98" r="1.1"/>
<circle cx="301" cy="332" r="1.5"/>
<circle cx="411" cy="333" r="1.5"/>
<circle cx="535" cy="492" r="1.1"/>
<circle cx="922" cy="226" r="1.5"/>
<circle cx="959" cy="416" r="1.5"/>
<circle cx="441" cy="740" r="1.1"/>
<circle cx="556" cy="187" r="1.5"/>
<circle cx="399" cy="531" r="1.5"/>
<circle cx="1221" cy="632" r="1.1"/>
<circle cx="724" cy="268" r="1.5"/>
<circle cx="310" cy="535" r="1.5"/>
<circle cx="894" cy="328" r="1.1"/>
<circle cx="982" cy="394" r="1.5"/>
<circle cx="1290" cy="598" r="1.5"/>
<circle cx="561" cy="717" r="1.1"/>
<circle cx="345" cy="456" r="1.5"/>
<circle cx="728" cy="249" r="1.5"/>
<circle cx="360" cy="630" r="1.1"/>
<circle cx="311" cy="469" r="1.5"/>
<circle cx="1294" cy="182" r="1.5"/>
<circle cx="509" cy="509" r="1.1"/>
<circle cx="835" cy="533" r="1.5"/>
<circle cx="1159" cy="205" r="1.5"/>
<circle cx="626" cy="293" r="1.1"/>
<circle cx="349" cy="707" r="1.5"/>
<circle cx="1127" cy="585" r="1.5"/>
<circle cx="305" cy="676" r="1.1"/>
<circle cx="1087" cy="409" r="1.5"/>
<circle cx="1084" cy="400" r="1.5"/>
<circle cx="537" cy="156" r="1.1"/>
<circle cx="544" cy="109" r="1.5"/>
<circle cx="653" cy="609" r="1.5"/>
<circle cx="1034" cy="676" r="1.1"/>
<circle cx="1052" cy="269" r="1.5"/>
<circle cx="884" cy="389" r="1.5"/>
<circle cx="1133" cy="450" r="1.1"/>
<circle cx="579" cy="533" r="1.5"/>
<circle cx="1320" cy="235" r="1.5"/>
<circle cx="1230" cy="93" r="1.1"/>
<circle cx="574" cy="248" r="1.5"/>
<circle cx="1086" cy="746" r="1.5"/>
<circle cx="1088" cy="312" r="1.1"/>
<circle cx="1230" cy="313" r="1.5"/>
<circle cx="551" cy="720" r="1.5"/>
<circle cx="966" cy="569" r="1.1"/>
<circle cx="1002" cy="770" r="1.5"/>
<circle cx="795" cy="672" r="1.5"/>
<circle cx="1037" cy="685" r="1.1"/>
<circle cx="761" cy="591" r="1.5"/>
<circle cx="902" cy="298" r="1.5"/>
<circle cx="522" cy="520" r="1.1"/>
<circle cx="380" cy="722" r="1.5"/>
<circle cx="451" cy="101" r="1.5"/>
<circle cx="411" cy="735" r="1.1"/>
<circle cx="663" cy="182" r="1.5"/>
<circle cx="328" cy="111" r="1.5"/>
<circle cx="1031" cy="528" r="1.1"/>
<circle cx="1036" cy="600" r="1.5"/>
<circle cx="368" cy="497" r="1.5"/>
<circle cx="683" cy="657" r="1.1"/>
<circle cx="1166" cy="709" r="1.5"/>
<circle cx="368" cy="692" r="1.5"/>
<circle cx="1266" cy="746" r="1.1"/>
<circle cx="411" cy="227" r="1.5"/>
<circle cx="417" cy="106" r="1.5"/>
<circle cx="1196" cy="653" r="1.1"/>
<circle cx="970" cy="662" r="1.5"/>
<circle cx="967" cy="284" r="1.5"/>
<circle cx="404" cy="151" r="1.1"/>
<circle cx="1100" cy="226" r="1.5"/>
<circle cx="636" cy="380" r="1.5"/>
<circle cx="320" cy="262" r="1.1"/>
<circle cx="597" cy="585" r="1.5"/>
<circle cx="688" cy="308" r="1.5"/>
<circle cx="1319" cy="436" r="1.1"/>
<circle cx="1200" cy="517" r="1.5"/>
<circle cx="331" cy="372" r="1.5"/>
<circle cx="760" cy="625" r="1.1"/>
<circle cx="665" cy="577" r="1.5"/>
<circle cx="868" cy="234" r="1.5"/>
<circle cx="1211" cy="146" r="1.1"/>
<circle cx="1166" cy="202" r="1.5"/>
<circle cx="299" cy="224" r="1.5"/>
<circle cx="1105" cy="769" r="1.1"/>
<circle cx="303" cy="427" r="1.5"/>
<circle cx="818" cy="642" r="1.5"/>
<circle cx="493" cy="430" r="1.1"/>
<circle cx="666" cy="667" r="1.5"/>
<circle cx="574" cy="746" r="1.5"/>
<circle cx="598" cy="233" r="1.1"/>
<circle cx="1039" cy="432" r="1.5"/>
<circle cx="414" cy="529" r="1.5"/>
<circle cx="384" cy="636" r="1.1"/>
<circle cx="1036" cy="635" r="1.5"/>
<circle cx="963" cy="332" r="1.5"/>
<circle cx="723" cy="359" r="1.1"/>
<circle cx="1241" cy="143" r="1.5"/>
<circle cx="1239" cy="100" r="1.5"/>
<circle cx="516" cy="267" r="1.1"/>
<circle cx="1252" cy="434" r="1.5"/>
<circle cx="700" cy="703" r="1.5"/>
<circle cx="545" cy="406" r="1.1"/>
<circle cx="861" cy="612" r="1.5"/>
<circle cx="1095" cy="536" r="1.5"/>
<circle cx="667" cy="312" r="1.1"/>
<circle cx="462" cy="675" r="1.5"/>
<circle cx="999" cy="604" r="1.5"/>
<circle cx="478" cy="390" r="1.1"/>
<circle cx="1117" cy="489" r="1.5"/>
<circle cx="431" cy="407" r="1.5"/>
<circle cx="1235" cy="249" r="1.1"/>
<circle cx="501" cy="294" r="1.5"/>
</g>
<g filter="url(#sb)" fill="#aecde4">
<circle cx="803.7" cy="431.5" r="1.8"/>
<circle cx="570.0" cy="208.4" r="1.8"/>
<circle cx="619.7" cy="187.7" r="1.8"/>
<circle cx="719.5" cy="202.4" r="1.8"/>
<circle cx="371.8" cy="300.0" r="1.8"/>
<circle cx="411.0" cy="248.3" r="1.8"/>
<circle cx="483.0" cy="249.8" r="1.8"/>
<circle cx="580.5" cy="284.5" r="1.8"/>
<circle cx="545.5" cy="286.4" r="1.8"/>
<circle cx="524.0" cy="266.8" r="1.8"/>
<circle cx="1071.8" cy="232.5" r="1.8"/>
<circle cx="1004.7" cy="292.8" r="1.8"/>
<circle cx="1205.2" cy="355.3" r="1.8"/>
<circle cx="1258.0" cy="102.5" r="1.8"/>
<circle cx="1308.4" cy="176.7" r="1.8"/>
<circle cx="1288.8" cy="172.2" r="1.8"/>
<circle cx="854.4" cy="201.6" r="1.8"/>
<circle cx="929.4" cy="126.2" r="1.8"/>
<circle cx="932.4" cy="149.6" r="1.8"/>
<circle cx="1094.8" cy="257.7" r="1.8"/>
<circle cx="1097.0" cy="303.3" r="1.8"/>
<circle cx="1101.0" cy="303.3" r="1.8"/>
<circle cx="835.9" cy="333.9" r="1.8"/>
<circle cx="1335.6" cy="217.8" r="1.8"/>
<circle cx="1351.8" cy="364.4" r="1.8"/>
<circle cx="1266.2" cy="369.3" r="1.8"/>
<circle cx="913.9" cy="410.0" r="1.8"/>
<circle cx="1230.4" cy="160.5" r="1.8"/>
<circle cx="979.1" cy="220.4" r="1.8"/>
<circle cx="892.1" cy="269.0" r="1.8"/>
<circle cx="856.7" cy="136.4" r="1.8"/>
<circle cx="1340.0" cy="427.0" r="1.8"/>
<circle cx="386.1" cy="584.5" r="1.8"/>
<circle cx="389.5" cy="579.6" r="1.8"/>
<circle cx="347.6" cy="674.2" r="1.8"/>
<circle cx="525.9" cy="690.7" r="1.8"/>
<circle cx="479.1" cy="717.9" r="1.8"/>
<circle cx="476.9" cy="723.9" r="1.8"/>
<circle cx="559.4" cy="708.1" r="1.8"/>
<circle cx="536.8" cy="738.6" r="1.8"/>
<circle cx="627.2" cy="691.5" r="1.8"/>
<circle cx="633.3" cy="742.7" r="1.8"/>
<circle cx="745.5" cy="675.7" r="1.8"/>
<circle cx="812.2" cy="706.2" r="1.8"/>
<circle cx="751.9" cy="543.0" r="1.8"/>
<circle cx="698.0" cy="574.3" r="1.8"/>
<circle cx="567.3" cy="602.2" r="1.8"/>
<circle cx="626.5" cy="609.0" r="1.8"/>
<circle cx="339.4" cy="563.4" r="1.8"/>
<circle cx="337.1" cy="607.5" r="1.8"/>
<circle cx="759.1" cy="498.2" r="1.8"/>
<circle cx="564.7" cy="761.6" r="1.8"/>
<circle cx="317.9" cy="698.3" r="1.8"/>
<circle cx="869.8" cy="530.2" r="1.8"/>
<circle cx="1005.1" cy="638.4" r="1.8"/>
<circle cx="1106.1" cy="470.3" r="1.8"/>
<circle cx="1075.9" cy="577.3" r="1.8"/>
<circle cx="1271.5" cy="490.7" r="1.8"/>
<circle cx="1214.2" cy="548.3" r="1.8"/>
<circle cx="1192.7" cy="563.0" r="1.8"/>
<circle cx="1159.2" cy="534.0" r="1.8"/>
<circle cx="1287.3" cy="608.2" r="1.8"/>
<circle cx="1296.0" cy="682.1" r="1.8"/>
<circle cx="1313.7" cy="670.8" r="1.8"/>
<circle cx="864.2" cy="701.7" r="1.8"/>
<circle cx="870.6" cy="719.4" r="1.8"/>
<circle cx="868.3" cy="736.7" r="1.8"/>
<circle cx="1074.4" cy="724.3" r="1.8"/>
<circle cx="952.7" cy="643.6" r="1.8"/>
<circle cx="1160.7" cy="623.7" r="1.8"/>
<circle cx="1287.3" cy="727.3" r="1.8"/>
</g>
<g filter="url(#sb)">
<circle cx="418.9" cy="137.2" r="2.3" fill="#98bcd8"/><circle cx="418.9" cy="137.2" r="1.4" fill="#f2f8fd"/>
<circle cx="364.6" cy="164.7" r="2.3" fill="#98bcd8"/><circle cx="364.6" cy="164.7" r="1.4" fill="#f2f8fd"/>
<circle cx="349.5" cy="184.3" r="2.3" fill="#98bcd8"/><circle cx="349.5" cy="184.3" r="1.4" fill="#f2f8fd"/>
<circle cx="436.6" cy="223.1" r="2.3" fill="#98bcd8"/><circle cx="436.6" cy="223.1" r="1.4" fill="#f2f8fd"/>
<circle cx="511.3" cy="217.9" r="2.3" fill="#98bcd8"/><circle cx="511.3" cy="217.9" r="1.4" fill="#f2f8fd"/>
<circle cx="513.6" cy="216.6" r="2.3" fill="#98bcd8"/><circle cx="513.6" cy="216.6" r="1.4" fill="#f2f8fd"/>
<circle cx="309.6" cy="270.9" r="2.3" fill="#98bcd8"/><circle cx="309.6" cy="270.9" r="1.4" fill="#f2f8fd"/>
<circle cx="459.6" cy="297.3" r="2.3" fill="#98bcd8"/><circle cx="459.6" cy="297.3" r="1.4" fill="#f2f8fd"/>
<circle cx="479.5" cy="364.4" r="2.3" fill="#98bcd8"/><circle cx="479.5" cy="364.4" r="1.4" fill="#f2f8fd"/>
<circle cx="572.6" cy="233.6" r="2.3" fill="#98bcd8"/><circle cx="572.6" cy="233.6" r="1.4" fill="#f2f8fd"/>
<circle cx="562.0" cy="274.3" r="2.3" fill="#98bcd8"/><circle cx="562.0" cy="274.3" r="1.4" fill="#f2f8fd"/>
<circle cx="487.1" cy="274.3" r="2.3" fill="#98bcd8"/><circle cx="487.1" cy="274.3" r="1.4" fill="#f2f8fd"/>
<circle cx="802.8" cy="146.2" r="2.3" fill="#98bcd8"/><circle cx="802.8" cy="146.2" r="1.4" fill="#f2f8fd"/>
<circle cx="732.7" cy="289.8" r="2.3" fill="#98bcd8"/><circle cx="732.7" cy="289.8" r="1.4" fill="#f2f8fd"/>
<circle cx="942.6" cy="180.5" r="2.3" fill="#98bcd8"/><circle cx="942.6" cy="180.5" r="1.4" fill="#f2f8fd"/>
<circle cx="1002.8" cy="235.1" r="2.3" fill="#98bcd8"/><circle cx="1002.8" cy="235.1" r="1.4" fill="#f2f8fd"/>
<circle cx="1007.4" cy="339.5" r="2.3" fill="#98bcd8"/><circle cx="1007.4" cy="339.5" r="1.4" fill="#f2f8fd"/>
<circle cx="1137.0" cy="356.1" r="2.3" fill="#98bcd8"/><circle cx="1137.0" cy="356.1" r="1.4" fill="#f2f8fd"/>
<circle cx="949.3" cy="401.3" r="2.3" fill="#98bcd8"/><circle cx="949.3" cy="401.3" r="1.4" fill="#f2f8fd"/>
<circle cx="1323.5" cy="269.8" r="2.3" fill="#98bcd8"/><circle cx="1323.5" cy="269.8" r="1.4" fill="#f2f8fd"/>
<circle cx="1166.4" cy="102.9" r="2.3" fill="#98bcd8"/><circle cx="1166.4" cy="102.9" r="1.4" fill="#f2f8fd"/>
<circle cx="1261.0" cy="92.0" r="2.3" fill="#98bcd8"/><circle cx="1261.0" cy="92.0" r="1.4" fill="#f2f8fd"/>
<circle cx="1201.8" cy="174.1" r="2.3" fill="#98bcd8"/><circle cx="1201.8" cy="174.1" r="1.4" fill="#f2f8fd"/>
<circle cx="404.5" cy="476.0" r="2.3" fill="#98bcd8"/><circle cx="404.5" cy="476.0" r="1.4" fill="#f2f8fd"/>
<circle cx="403.0" cy="500.8" r="2.3" fill="#98bcd8"/><circle cx="403.0" cy="500.8" r="1.4" fill="#f2f8fd"/>
<circle cx="514.6" cy="505.0" r="2.3" fill="#98bcd8"/><circle cx="514.6" cy="505.0" r="1.4" fill="#f2f8fd"/>
<circle cx="463.3" cy="583.4" r="2.3" fill="#98bcd8"/><circle cx="463.3" cy="583.4" r="1.4" fill="#f2f8fd"/>
<circle cx="410.6" cy="647.4" r="2.3" fill="#98bcd8"/><circle cx="410.6" cy="647.4" r="1.4" fill="#f2f8fd"/>
<circle cx="518.0" cy="670.4" r="2.3" fill="#98bcd8"/><circle cx="518.0" cy="670.4" r="1.4" fill="#f2f8fd"/>
<circle cx="455.0" cy="697.9" r="2.3" fill="#98bcd8"/><circle cx="455.0" cy="697.9" r="1.4" fill="#f2f8fd"/>
<circle cx="639.7" cy="525.0" r="2.3" fill="#98bcd8"/><circle cx="639.7" cy="525.0" r="1.4" fill="#f2f8fd"/>
<circle cx="669.8" cy="633.8" r="2.3" fill="#98bcd8"/><circle cx="669.8" cy="633.8" r="1.4" fill="#f2f8fd"/>
<circle cx="637.8" cy="716.4" r="2.3" fill="#98bcd8"/><circle cx="637.8" cy="716.4" r="1.4" fill="#f2f8fd"/>
<circle cx="645.7" cy="750.3" r="2.3" fill="#98bcd8"/><circle cx="645.7" cy="750.3" r="1.4" fill="#f2f8fd"/>
<circle cx="701.8" cy="775.9" r="2.3" fill="#98bcd8"/><circle cx="701.8" cy="775.9" r="1.4" fill="#f2f8fd"/>
<circle cx="739.5" cy="677.9" r="2.3" fill="#98bcd8"/><circle cx="739.5" cy="677.9" r="1.4" fill="#f2f8fd"/>
<circle cx="791.9" cy="677.9" r="2.3" fill="#98bcd8"/><circle cx="791.9" cy="677.9" r="1.4" fill="#f2f8fd"/>
<circle cx="811.9" cy="568.3" r="2.3" fill="#98bcd8"/><circle cx="811.9" cy="568.3" r="1.4" fill="#f2f8fd"/>
<circle cx="929.0" cy="477.9" r="2.3" fill="#98bcd8"/><circle cx="929.0" cy="477.9" r="1.4" fill="#f2f8fd"/>
<circle cx="941.4" cy="545.3" r="2.3" fill="#98bcd8"/><circle cx="941.4" cy="545.3" r="1.4" fill="#f2f8fd"/>
<circle cx="1008.1" cy="620.3" r="2.3" fill="#98bcd8"/><circle cx="1008.1" cy="620.3" r="1.4" fill="#f2f8fd"/>
<circle cx="1030.7" cy="642.9" r="2.3" fill="#98bcd8"/><circle cx="1030.7" cy="642.9" r="1.4" fill="#f2f8fd"/>
<circle cx="1051.8" cy="510.3" r="2.3" fill="#98bcd8"/><circle cx="1051.8" cy="510.3" r="1.4" fill="#f2f8fd"/>
<circle cx="1258.3" cy="485.4" r="2.3" fill="#98bcd8"/><circle cx="1258.3" cy="485.4" r="1.4" fill="#f2f8fd"/>
<circle cx="1331.0" cy="486.9" r="2.3" fill="#98bcd8"/><circle cx="1331.0" cy="486.9" r="1.4" fill="#f2f8fd"/>
<circle cx="1355.1" cy="537.8" r="2.3" fill="#98bcd8"/><circle cx="1355.1" cy="537.8" r="1.4" fill="#f2f8fd"/>
<circle cx="1291.8" cy="589.0" r="2.3" fill="#98bcd8"/><circle cx="1291.8" cy="589.0" r="1.4" fill="#f2f8fd"/>
<circle cx="1294.9" cy="625.6" r="2.3" fill="#98bcd8"/><circle cx="1294.9" cy="625.6" r="1.4" fill="#f2f8fd"/>
<circle cx="897.7" cy="763.5" r="2.3" fill="#98bcd8"/><circle cx="897.7" cy="763.5" r="1.4" fill="#f2f8fd"/>
<circle cx="871.0" cy="700.9" r="2.3" fill="#98bcd8"/><circle cx="871.0" cy="700.9" r="1.4" fill="#f2f8fd"/>
<circle cx="1142.6" cy="81.8" r="2.3" fill="#98bcd8"/><circle cx="1142.6" cy="81.8" r="1.4" fill="#f2f8fd"/>
</g>
<g filter="url(#sb)">
<circle cx="333.3" cy="128.1" r="3.5" fill="#9cc0dc"/><circle cx="333.3" cy="128.1" r="2.4" fill="#fff"/>
<circle cx="514.9" cy="324.4" r="3.5" fill="#9cc0dc"/><circle cx="514.9" cy="324.4" r="2.4" fill="#fff"/>
<circle cx="787.4" cy="198.2" r="3.5" fill="#9cc0dc"/><circle cx="787.4" cy="198.2" r="2.4" fill="#fff"/>
<circle cx="972.0" cy="173.0" r="3.5" fill="#9cc0dc"/><circle cx="972.0" cy="173.0" r="2.4" fill="#fff"/>
<circle cx="437.7" cy="456.4" r="3.5" fill="#9cc0dc"/><circle cx="437.7" cy="456.4" r="2.4" fill="#fff"/>
<circle cx="489.0" cy="567.9" r="3.5" fill="#9cc0dc"/><circle cx="489.0" cy="567.9" r="2.4" fill="#fff"/>
<circle cx="434.7" cy="603.7" r="3.5" fill="#9cc0dc"/><circle cx="434.7" cy="603.7" r="2.4" fill="#fff"/>
<circle cx="492.7" cy="730.3" r="3.5" fill="#9cc0dc"/><circle cx="492.7" cy="730.3" r="2.4" fill="#fff"/>
<circle cx="915.8" cy="518.9" r="3.5" fill="#9cc0dc"/><circle cx="915.8" cy="518.9" r="2.4" fill="#fff"/>
<circle cx="981.4" cy="590.1" r="3.5" fill="#9cc0dc"/><circle cx="981.4" cy="590.1" r="2.4" fill="#fff"/>
<circle cx="966.3" cy="756.3" r="3.5" fill="#9cc0dc"/><circle cx="966.3" cy="756.3" r="2.4" fill="#fff"/>
<circle cx="1301.6" cy="592.8" r="3.5" fill="#9cc0dc"/><circle cx="1301.6" cy="592.8" r="2.4" fill="#fff"/>
<circle cx="1121.9" cy="476.0" r="3.5" fill="#9cc0dc"/><circle cx="1121.9" cy="476.0" r="2.4" fill="#fff"/>
<circle cx="469.0" cy="305.2" r="3.5" fill="#9cc0dc"/><circle cx="469.0" cy="305.2" r="2.4" fill="#fff"/>
<circle cx="993.4" cy="294.7" r="3.5" fill="#9cc0dc"/><circle cx="993.4" cy="294.7" r="2.4" fill="#fff"/>
<circle cx="1092.5" cy="213.7" r="3.5" fill="#9cc0dc"/><circle cx="1092.5" cy="213.7" r="2.4" fill="#fff"/>
<circle cx="1061.6" cy="234.8" r="3.5" fill="#9cc0dc"/><circle cx="1061.6" cy="234.8" r="2.4" fill="#fff"/>
</g>
<g filter="url(#nb)" transform="rotate(35 828 433.5)"><ellipse cx="828" cy="433.5" rx="12" ry="9.6" fill="#7f8d96" stroke="#93b6cb" stroke-width="5.5" stroke-opacity=".92"/></g>
</g>
</svg>
<div class="a" style="left:378px;top:79px;width:182px;height:1px;background:linear-gradient(90deg,rgba(50,50,50,.6) 0,rgba(50,50,50,.6) 45%,rgba(50,50,50,0) 100%);"></div>
<div class="a" style="left:654px;top:79px;width:206px;height:1px;background:linear-gradient(90deg,rgba(50,50,50,.6) 0,rgba(50,50,50,.6) 45%,rgba(50,50,50,0) 100%);"></div>
<div class="a" style="left:926px;top:79px;width:204px;height:1px;background:linear-gradient(90deg,rgba(50,50,50,.6) 0,rgba(50,50,50,.6) 45%,rgba(50,50,50,0) 100%);"></div>
<div class="a" style="left:1198px;top:79px;width:162px;height:1px;background:linear-gradient(90deg,rgba(50,50,50,.6) 0,rgba(50,50,50,.6) 45%,rgba(50,50,50,0) 100%);"></div>
<div class="a" style="left:295px;top:79px;width:1px;height:127px;background:linear-gradient(0deg,rgba(50,50,50,.6) 0,rgba(50,50,50,.6) 40%,rgba(50,50,50,0) 100%);"></div>
<div class="a" style="left:295px;top:300px;width:1px;height:156px;background:linear-gradient(0deg,rgba(50,50,50,.6) 0,rgba(50,50,50,.6) 40%,rgba(50,50,50,0) 100%);"></div>
<div class="a" style="left:295px;top:560px;width:1px;height:147px;background:linear-gradient(0deg,rgba(50,50,50,.6) 0,rgba(50,50,50,.6) 40%,rgba(50,50,50,0) 100%);"></div>
<div class="a" style="left:1359px;top:114px;width:1px;height:186px;background:linear-gradient(180deg,rgba(50,50,50,.6) 0,rgba(50,50,50,.6) 45%,rgba(50,50,50,0) 100%);"></div>
<div class="a" style="left:1359px;top:365px;width:1px;height:175px;background:linear-gradient(180deg,rgba(50,50,50,.6) 0,rgba(50,50,50,.6) 45%,rgba(50,50,50,0) 100%);"></div>
<div class="a" style="left:1359px;top:643px;width:1px;height:145px;background:linear-gradient(180deg,rgba(50,50,50,.6) 0,rgba(50,50,50,.6) 45%,rgba(50,50,50,0) 100%);"></div>
<div class="a" style="left:295px;top:787px;width:130px;height:1px;background:linear-gradient(270deg,rgba(50,50,50,.6) 0,rgba(50,50,50,.6) 50%,rgba(40,40,40,.3) 100%);"></div>
<div class="a" style="left:682px;top:787px;width:256px;height:1px;background:linear-gradient(270deg,rgba(50,50,50,.6) 0,rgba(50,50,50,.6) 50%,rgba(40,40,40,.3) 100%);"></div>
<div class="a" style="left:1196px;top:787px;width:164px;height:1px;background:linear-gradient(270deg,rgba(50,50,50,.6) 0,rgba(50,50,50,.6) 50%,rgba(40,40,40,.3) 100%);"></div>
<div class="a" style="left:236px;top:818px;width:254px;height:210px;background:#fff;border:1px solid #898c95;border-right-color:#fff;box-sizing:border-box;"></div>
<div class="a" style="left:328px;top:800px;width:86px;height:18px;background:linear-gradient(180deg,#f3f3f3 0,#ececec 8px,#dedede 9px,#d0d0d0 17px);border:1px solid #898c95;border-bottom:none;box-shadow:inset 1px 1px 0 rgba(255,255,255,.75),inset -1px 0 0 rgba(255,255,255,.75);box-sizing:border-box;"></div>
<div class="a" style="left:415px;top:800px;width:63px;height:18px;background:linear-gradient(180deg,#f3f3f3 0,#ececec 8px,#dedede 9px,#d0d0d0 17px);border:1px solid #898c95;border-bottom:none;box-shadow:inset 1px 1px 0 rgba(255,255,255,.75),inset -1px 0 0 rgba(255,255,255,.75);box-sizing:border-box;"></div>
<div class="a" style="left:236px;top:798px;width:92px;height:21px;background:#fff;border:1px solid #898c95;border-bottom:none;box-sizing:border-box;"></div>
<div class="t n" id="tab0" style="left:244.5px;top:802px;color:#000;letter-spacing:.4px;">RGB/K Уровни</div>
<div class="t n" id="tab1" style="left:331.5px;top:804px;letter-spacing:-.1px;color:#000;">Освещённость</div>
<div class="t n" id="tab2" style="left:420.5px;top:804px;letter-spacing:-.1px;color:#000;">Цветность</div>
<div class="a" style="left:243px;top:828px;width:20px;height:44px;background:linear-gradient(90deg,#b2b2b2 0,#dcdcdc 25%,#fbfbfb 48%,#d8d8d8 75%,#aeaeae 100%);"></div>
<svg style="left:243px;top:828px" width="20" height="44" viewBox="0 0 20 44"><path d="M6 2.5H1.5V16.5L19 19.5L9.5 24" fill="none" stroke="#000" stroke-width="0.9"/><text transform="translate(13.2,43.4) rotate(-90)" font-family="Liberation Sans,sans-serif" font-weight="bold" font-size="12.5" fill="#000">log</text></svg>
<div class="a" style="left:264px;top:825px;width:222px;height:48px;background:#fff;border:1px solid;border-color:#a0a0a0 #fff #e3e3e3 #a0a0a0;box-sizing:border-box;"></div>
<div class="a" style="left:265px;top:826px;width:220px;height:46px;border:1px solid;border-color:#696969 #e3e3e3 #fff #696969;box-sizing:border-box;"></div>
<div class="a" style="left:270px;top:831px;width:210px;height:18px;background:linear-gradient(90deg,#000 0,#ff0000 100%);border:1px solid #000;box-sizing:border-box;"></div>
<svg style="left:260px;top:849px" width="230" height="18" viewBox="0 0 230 18"><path d="M10 8.5h7v6.5h-7z" fill="#000"/><path d="M11.5 0L16.5 9.5H6.5Z" fill="#000"/><path d="M115.5 0.6L120 9.5H111Z" fill="#aa0000" stroke="#300" stroke-width="0.8" stroke-opacity=".7"/><path d="M213.5 8.5h6.5v6h-6.5z" fill="#ee1414" stroke="#7a0000" stroke-width="1"/><path d="M219.5 0.6L224 9.5H215Z" fill="#ee1414" stroke="#7a0000" stroke-width="0.8"/></svg>
<div class="a" style="left:243px;top:880px;width:20px;height:44px;background:linear-gradient(90deg,#b2b2b2 0,#dcdcdc 25%,#fbfbfb 48%,#d8d8d8 75%,#aeaeae 100%);"></div>
<svg style="left:243px;top:880px" width="20" height="44" viewBox="0 0 20 44"><path d="M6 2.5H1.5V16.5L19 19.5L9.5 24" fill="none" stroke="#000" stroke-width="0.9"/><text transform="translate(13.2,43.4) rotate(-90)" font-family="Liberation Sans,sans-serif" font-weight="bold" font-size="12.5" fill="#000">log</text></svg>
<div class="a" style="left:264px;top:877px;width:222px;height:48px;background:#fff;border:1px solid;border-color:#a0a0a0 #fff #e3e3e3 #a0a0a0;box-sizing:border-box;"></div>
<div class="a" style="left:265px;top:878px;width:220px;height:46px;border:1px solid;border-color:#696969 #e3e3e3 #fff #696969;box-sizing:border-box;"></div>
<div class="a" style="left:270px;top:883px;width:210px;height:18px;background:linear-gradient(90deg,#000 0,#00ff00 100%);border:1px solid #000;box-sizing:border-box;"></div>
<svg style="left:260px;top:901px" width="230" height="18" viewBox="0 0 230 18"><path d="M10 8.5h7v6.5h-7z" fill="#000"/><path d="M11.5 0L16.5 9.5H6.5Z" fill="#000"/><path d="M115.5 0.6L120 9.5H111Z" fill="#008800" stroke="#300" stroke-width="0.8" stroke-opacity=".7"/><path d="M213.5 8.5h6.5v6h-6.5z" fill="#22ee22" stroke="#006000" stroke-width="1"/><path d="M219.5 0.6L224 9.5H215Z" fill="#22ee22" stroke="#006000" stroke-width="0.8"/></svg>
<div class="a" style="left:243px;top:932px;width:20px;height:44px;background:linear-gradient(90deg,#b2b2b2 0,#dcdcdc 25%,#fbfbfb 48%,#d8d8d8 75%,#aeaeae 100%);"></div>
<svg style="left:243px;top:932px" width="20" height="44" viewBox="0 0 20 44"><path d="M6 2.5H1.5V16.5L19 19.5L9.5 24" fill="none" stroke="#000" stroke-width="0.9"/><text transform="translate(13.2,43.4) rotate(-90)" font-family="Liberation Sans,sans-serif" font-weight="bold" font-size="12.5" fill="#000">log</text></svg>
<div class="a" style="left:264px;top:929px;width:222px;height:48px;background:#fff;border:1px solid;border-color:#a0a0a0 #fff #e3e3e3 #a0a0a0;box-sizing:border-box;"></div>
<div class="a" style="left:265px;top:930px;width:220px;height:46px;border:1px solid;border-color:#696969 #e3e3e3 #fff #696969;box-sizing:border-box;"></div>
<div class="a" style="left:270px;top:935px;width:210px;height:18px;background:linear-gradient(90deg,#000 0,#0000ff 100%);border:1px solid #000;box-sizing:border-box;"></div>
<svg style="left:260px;top:953px" width="230" height="18" viewBox="0 0 230 18"><path d="M10 8.5h7v6.5h-7z" fill="#000"/><path d="M11.5 0L16.5 9.5H6.5Z" fill="#000"/><path d="M115.5 0.6L120 9.5H111Z" fill="#0000aa" stroke="#300" stroke-width="0.8" stroke-opacity=".7"/><path d="M213.5 8.5h6.5v6h-6.5z" fill="#1414ee" stroke="#000070" stroke-width="1"/><path d="M219.5 0.6L224 9.5H215Z" fill="#1414ee" stroke="#000070" stroke-width="0.8"/></svg>
<div class="a" style="left:245px;top:984px;width:13px;height:13px;background:linear-gradient(135deg,#d0d3d8 0,#f4f4f4 70%,#fff 100%);border:1px solid #8e8f8f;box-shadow:inset 0 0 0 1px #f4f4f4;box-sizing:border-box;"></div>
<div class="t n" id="cb" style="left:260.7px;top:985px;color:#000;">Связанные установки</div>
<div class="a" style="left:241px;top:1003px;width:70px;height:21px;background:linear-gradient(180deg,#f2f2f2 0,#ebebeb 9px,#dddddd 10px,#cfcfcf 19px);border:1px solid #707070;border-radius:3px;box-shadow:inset 0 0 0 1px rgba(255,255,255,.85);box-sizing:border-box;"></div>
<div class="t n" id="b0" style="left:247.6px;top:1008px;color:#000;letter-spacing:-.15px;">Применить</div>
<div class="a" style="left:415px;top:1003px;width:70px;height:21px;background:linear-gradient(180deg,#f2f2f2 0,#ebebeb 9px,#dddddd 10px,#cfcfcf 19px);border:1px solid #707070;border-radius:3px;box-shadow:inset 0 0 0 1px rgba(255,255,255,.85);box-sizing:border-box;"></div>
<div class="t n" id="b1" style="left:425.6px;top:1008px;color:#000;letter-spacing:-.15px;">Сбросить</div>
<svg style="left:330px;top:1004px" width="76" height="18" viewBox="0 0 76 18">
<defs><linearGradient id="gg" gradientUnits="userSpaceOnUse" x1="0" y1="-8" x2="0" y2="8"><stop offset="0" stop-color="#a8a8a8"/><stop offset="0.4" stop-color="#666"/><stop offset="0.6" stop-color="#343434"/><stop offset="1" stop-color="#161616"/></linearGradient>
<linearGradient id="gs" x1="0" y1="0" x2="1" y2="0"><stop offset="0" stop-color="#8a8a8a"/><stop offset="0.45" stop-color="#e6e6e6"/><stop offset="1" stop-color="#8a8a8a"/></linearGradient></defs>
<g fill="#a3a3a3" transform="translate(0,3)"><path d="M0 1.2V9H7.2Z"/><path d="M3.4 5.6L7.6 2Q8.8 1.5 10.5 1.5Q13.5 1.5 13.5 4.6Q13.5 7.6 10.4 7.7" fill="none" stroke="#a3a3a3" stroke-width="3"/></g>
<g fill="#a3a3a3" transform="translate(73,3) scale(-1,1)"><path d="M0 1.2V9H7.2Z"/><path d="M3.4 5.6L7.6 2Q8.8 1.5 10.5 1.5Q13.5 1.5 13.5 4.6Q13.5 7.6 10.4 7.7" fill="none" stroke="#a3a3a3" stroke-width="3"/></g>
<g transform="translate(36,9)"><g fill="url(#gg)"><path d="M1.11 -8.26L3.96 -7.34L3.04 -3.85L-0.20 -4.90ZM5.75 -6.03L7.52 -3.61L4.72 -1.33L2.72 -4.08ZM8.20 -1.50L8.20 1.50L4.60 1.70L4.60 -1.70ZM7.52 3.61L5.75 6.03L2.72 4.08L4.72 1.33ZM3.96 7.34L1.11 8.26L-0.20 4.90L3.04 3.85ZM-1.11 8.26L-3.96 7.34L-3.04 3.85L0.20 4.90ZM-5.75 6.03L-7.52 3.61L-4.72 1.33L-2.72 4.08ZM-8.20 1.50L-8.20 -1.50L-4.60 -1.70L-4.60 1.70ZM-7.52 -3.61L-5.75 -6.03L-2.72 -4.08L-4.72 -1.33ZM-3.96 -7.34L-1.11 -8.26L0.20 -4.90L-3.04 -3.85Z"/><circle r="5.7"/></g>
<ellipse rx="3.4" ry="2.6" cy="1.2" fill="#2a2a2a"/><path d="M-5 3.2Q0 6.2 5 3.2" fill="none" stroke="#d8d8d8" stroke-width="0.7" stroke-opacity=".7"/><rect x="-1.7" y="-8.8" width="3.4" height="9.4" rx="0.8" fill="url(#gs)" stroke="#5a5a5a" stroke-width="0.5"/></g>
</svg>
<div class="a" style="left:496px;top:802px;width:384px;height:227px;background:#fff;border:1px solid;border-color:#a0a0a0 #fff #fff #a0a0a0;box-sizing:border-box;"></div>
<svg style="left:0;top:0" width="1433" height="1050" viewBox="0 0 1433 1050">
<polyline points="654.4,1027.7 654.9,1027.6 655.4,1027.4 655.9,1027.3 656.4,1027.1 656.9,1026.9 657.4,1026.6 657.9,1026.2 658.4,1025.8 658.9,1025.2 659.4,1024.6 659.9,1023.9 660.4,1023.0 660.9,1021.9 661.4,1020.6 661.9,1019.2 662.4,1017.5 662.9,1015.5 663.4,1013.2 663.9,1010.7 664.4,1007.7 664.9,1004.4 665.4,1000.6 665.9,996.5 666.4,991.8 666.9,986.7 667.4,981.2 667.9,975.1 668.4,968.5 668.9,961.4 669.4,953.9 669.9,945.9 670.4,937.5 670.9,928.8 671.4,919.7 671.9,910.4 672.4,900.9 672.9,891.4 673.4,881.8 673.9,872.4 674.4,863.2 674.9,854.2 675.4,845.7 675.9,837.8 676.4,830.5 676.9,823.9 677.4,818.1 677.9,813.2 678.4,809.3 678.9,806.5 679.4,804.7 679.9,804.0 680.4,804.4 680.9,806.0 681.4,808.6 681.9,812.2 682.4,816.8 682.9,822.4 683.4,828.8 683.9,836.0 684.4,843.8 684.9,852.2 685.4,861.0 685.9,870.1 686.4,879.5 686.9,889.1 687.4,898.6 687.9,908.1 688.4,917.5 688.9,926.6 689.4,935.4 689.9,943.9 690.4,952.0 690.9,959.7 691.4,966.8 691.9,973.5 692.4,979.7 692.9,985.4 693.4,990.7 693.9,995.4 694.4,999.7 694.9,1003.5 695.4,1006.9 695.9,1010.0 696.4,1012.7 696.9,1015.0 697.4,1017.0 697.9,1018.8 698.4,1020.3 698.9,1021.6 699.4,1022.7 699.9,1023.7 700.4,1024.4 700.9,1025.1 701.4,1025.7 701.9,1026.1 702.4,1026.5 702.9,1026.8 703.4,1027.0 703.9,1027.2 704.4,1027.4 704.9,1027.5 705.4,1027.6" fill="none" stroke="#8fb0e4" stroke-width="0.9" stroke-dasharray="2 1"/>
<polyline points="655.8,1027.7 656.3,1027.6 656.8,1027.4 657.3,1027.3 657.8,1027.1 658.3,1026.9 658.8,1026.6 659.3,1026.2 659.8,1025.8 660.3,1025.2 660.8,1024.6 661.3,1023.9 661.8,1023.0 662.3,1021.9 662.8,1020.6 663.3,1019.2 663.8,1017.5 664.3,1015.5 664.8,1013.2 665.3,1010.7 665.8,1007.7 666.3,1004.4 666.8,1000.6 667.3,996.5 667.8,991.8 668.3,986.7 668.8,981.2 669.3,975.1 669.8,968.5 670.3,961.4 670.8,953.9 671.3,945.9 671.8,937.5 672.3,928.8 672.8,919.7 673.3,910.4 673.8,900.9 674.3,891.4 674.8,881.8 675.3,872.4 675.8,863.2 676.3,854.2 676.8,845.7 677.3,837.8 677.8,830.5 678.3,823.9 678.8,818.1 679.3,813.2 679.8,809.3 680.3,806.5 680.8,804.7 681.3,804.0 681.8,804.4 682.3,806.0 682.8,808.6 683.3,812.2 683.8,816.8 684.3,822.4 684.8,828.8 685.3,836.0 685.8,843.8 686.3,852.2 686.8,861.0 687.3,870.1 687.8,879.5 688.3,889.1 688.8,898.6 689.3,908.1 689.8,917.5 690.3,926.6 690.8,935.4 691.3,943.9 691.8,952.0 692.3,959.7 692.8,966.8 693.3,973.5 693.8,979.7 694.3,985.4 694.8,990.7 695.3,995.4 695.8,999.7 696.3,1003.5 696.8,1006.9 697.3,1010.0 697.8,1012.7 698.3,1015.0 698.8,1017.0 699.3,1018.8 699.8,1020.3 700.3,1021.6 700.8,1022.7 701.3,1023.7 701.8,1024.4 702.3,1025.1 702.8,1025.7 703.3,1026.1 703.8,1026.5 704.3,1026.8 704.8,1027.0 705.3,1027.2 705.8,1027.4 706.3,1027.5 706.8,1027.6" fill="none" stroke="#eaa0a0" stroke-width="0.9" stroke-dasharray="2 1"/>
<polyline points="658.0,1027.7 658.5,1027.5 659.0,1027.4 659.5,1027.2 660.0,1027.0 660.5,1026.7 661.0,1026.3 661.5,1025.8 662.0,1025.2 662.5,1024.5 663.0,1023.6 663.5,1022.6 664.0,1021.3 664.5,1019.7 665.0,1017.9 665.5,1015.7 666.0,1013.2 666.5,1010.2 667.0,1006.8 667.5,1002.9 668.0,998.4 668.5,993.4 669.0,987.8 669.5,981.6 670.0,974.8 670.5,967.3 671.0,959.2 671.5,950.5 672.0,941.3 672.5,931.6 673.0,921.5 673.5,911.0 674.0,900.3 674.5,889.5 675.0,878.8 675.5,868.2 676.0,858.0 676.5,848.3 677.0,839.1 677.5,830.8 678.0,823.4 678.5,817.0 679.0,811.8 679.5,807.9 680.0,805.3 680.5,804.1 681.0,804.3 681.5,805.9 682.0,808.9 682.5,813.2 683.0,818.7 683.5,825.4 684.0,833.0 684.5,841.6 685.0,850.9 685.5,860.8 686.0,871.2 686.5,881.8 687.0,892.6 687.5,903.3 688.0,914.0 688.5,924.3 689.0,934.3 689.5,943.9 690.0,953.0 690.5,961.5 691.0,969.4 691.5,976.7 692.0,983.4 692.5,989.5 693.0,994.9 693.5,999.7 694.0,1004.0 694.5,1007.8 695.0,1011.1 695.5,1013.9 696.0,1016.4 696.5,1018.4 697.0,1020.2 697.5,1021.7 698.0,1022.9 698.5,1023.9 699.0,1024.7 699.5,1025.4 700.0,1026.0 700.5,1026.4 701.0,1026.8 701.5,1027.0 702.0,1027.3 702.5,1027.4 703.0,1027.6" fill="none" stroke="#93d293" stroke-width="0.9" stroke-dasharray="2 1"/>
<path d="M674.6 1028.5L676 1010L677.3 915L679 850L680 812L680.6 803L681.3 812L682.7 850L683.9 915L684.8 1010L686.4 1028.5Z" fill="#555"/>
<path d="M680.6 803L681.5 812L682 832L680.6 832L680 812Z" fill="#c8321e"/>
<path d="M682.4 825L683.4 825L684 872L683 872Z" fill="#3cc43c"/>
<path d="M678.3 886L679.3 886L679.2 902L678.1 902Z" fill="#b03030"/>
<path d="M678 902L679 902L678.7 932L677.6 932Z" fill="#6a3a8a"/>
<path d="M677.2 945L678.3 945L678 982L676.8 982Z" fill="#2030b8"/>
<path d="M676.4 990L677.5 990L677.2 1022L675.6 1022Z" fill="#2030b8"/>
<path d="M683.4 938L684.4 938L684.7 966L683.7 966Z" fill="#3cc43c"/>
<path d="M683.7 966L684.7 966L684.9 986L683.9 986Z" fill="#2a8a8a"/>
<path d="M684.6 1010L685.4 1010L686 1022L685 1022Z" fill="#2030b8"/>
<line x1="497.5" y1="1028" x2="877.5" y2="804.8" stroke="#0a0a0a" stroke-width="1" stroke-dasharray="3.2 1.2"/>
</svg>
</body></html>
